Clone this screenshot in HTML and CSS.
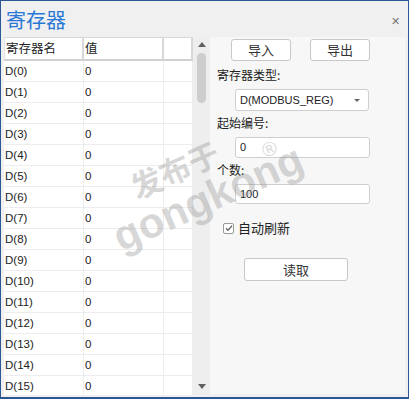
FILE: index.html
```html
<!DOCTYPE html>
<html lang="zh-CN">
<head>
    <meta charset="UTF-8">
    <title>寄存器</title>
    <link rel="stylesheet" href="styles.css">
</head>
<body>
    <div class="window">
        <div class="titlebar">
            <span class="title">寄存器</span>
            <span class="close">&#x2715;</span>
        </div>

        <div class="main">
            <div class="grid">
                <div class="row head">
                    <div class="cell">寄存器名</div>
                    <div class="cell">值</div>
                    <div class="cell"></div>
                </div>
                <div class="row"><div class="cell">D(0)</div><div class="cell">0</div><div class="cell"></div></div>
                <div class="row"><div class="cell">D(1)</div><div class="cell">0</div><div class="cell"></div></div>
                <div class="row"><div class="cell">D(2)</div><div class="cell">0</div><div class="cell"></div></div>
                <div class="row"><div class="cell">D(3)</div><div class="cell">0</div><div class="cell"></div></div>
                <div class="row"><div class="cell">D(4)</div><div class="cell">0</div><div class="cell"></div></div>
                <div class="row"><div class="cell">D(5)</div><div class="cell">0</div><div class="cell"></div></div>
                <div class="row"><div class="cell">D(6)</div><div class="cell">0</div><div class="cell"></div></div>
                <div class="row"><div class="cell">D(7)</div><div class="cell">0</div><div class="cell"></div></div>
                <div class="row"><div class="cell">D(8)</div><div class="cell">0</div><div class="cell"></div></div>
                <div class="row"><div class="cell">D(9)</div><div class="cell">0</div><div class="cell"></div></div>
                <div class="row"><div class="cell">D(10)</div><div class="cell">0</div><div class="cell"></div></div>
                <div class="row"><div class="cell">D(11)</div><div class="cell">0</div><div class="cell"></div></div>
                <div class="row"><div class="cell">D(12)</div><div class="cell">0</div><div class="cell"></div></div>
                <div class="row"><div class="cell">D(13)</div><div class="cell">0</div><div class="cell"></div></div>
                <div class="row"><div class="cell">D(14)</div><div class="cell">0</div><div class="cell"></div></div>
                <div class="row"><div class="cell">D(15)</div><div class="cell">0</div><div class="cell"></div></div>
            </div>

            <div class="scrollbar">
                <span class="arrow up"></span>
                <span class="thumb"></span>
                <span class="arrow down"></span>
            </div>

            <div class="panel">
                <div class="btn-row">
                    <button class="btn small">导入</button>
                    <button class="btn small">导出</button>
                </div>

                <div class="label first">寄存器类型:</div>
                <div class="field select">
                    <span>D(MODBUS_REG)</span>
                    <span class="caret"></span>
                </div>

                <div class="label">起始编号:</div>
                <div class="field">0</div>

                <div class="label">个数:</div>
                <div class="field short">100</div>

                <label class="check">
                    <span class="box">
                        <svg width="8" height="8" viewBox="0 0 8 8"><path d="M1 4.2 L3 6.2 L7 1.8" fill="none" stroke="#666" stroke-width="1.3"/></svg>
                    </span>
                    自动刷新
                </label>

                <button class="btn wide">读取</button>
            </div>
        </div>

        <!-- watermark from the screenshot -->
        <div class="watermark">
            <div class="wm-top">发布于</div>
            <div class="wm-bottom">gongkong</div>
            <span class="reg">®</span>
        </div>
    </div>
</body>
</html>
```

FILE: styles.css
```css
body {
    margin: 0;
    background-color: #f0f0f0;
    font-family: "Noto Sans CJK SC", "Liberation Sans", sans-serif;
}
.window {
    position: relative;
    width: 409px;
    height: 399px;
    box-sizing: border-box;
    border: 1px solid #2b5797;
    border-bottom-width: 2px;
    background-color: #f0f0f0;
    overflow: hidden;
}
.titlebar {
    height: 36px;
    display: flex;
    align-items: center;
    justify-content: space-between;
    padding: 0 8px 0 5px;
}
.title {
    font-size: 20px;
    color: #2a78d6;
    line-height: 24px;
    margin-top: 1px;
}
.close {
    font-size: 11px;
    color: #777;
    margin-top: 2px;
}
.main {
    display: flex;
    height: 358px;
    padding: 0 2px 0 3px;
}
.grid {
    width: 189px;
    background-color: #fff;
    overflow: hidden;
    flex: none;
}
.row {
    display: grid;
    grid-template-columns: 80px 80px 29px;
    height: 21px;
}
.cell {
    box-sizing: border-box;
    border-right: 1px solid #ededed;
    border-bottom: 1px solid #ededed;
    padding-left: 1px;
    font-family: "Liberation Sans", sans-serif;
    font-size: 11.5px;
    line-height: 20px;
    color: #222;
}
.row.head {
    height: 24px;
}
.head .cell {
    border-top: 1px solid #d8d8d8;
    border-right: 2px solid #d8d8d8;
    border-bottom: 2px solid #d0d0d0;
    font-family: "Noto Sans CJK SC", sans-serif;
    font-size: 12.5px;
    line-height: 20px;
    padding-left: 1px;
}
.head .cell:first-child {
    border-left: 1px solid #e4e4e4;
}
.scrollbar {
    width: 17px;
    flex: none;
    position: relative;
    background-color: #eeeeee;
}
.arrow {
    position: absolute;
    left: 5px;
    width: 0;
    height: 0;
    border-left: 4px solid transparent;
    border-right: 4px solid transparent;
}
.arrow.up {
    top: 5px;
    border-bottom: 5px solid #606060;
}
.arrow.down {
    bottom: 6px;
    border-top: 5px solid #606060;
}
.thumb {
    position: absolute;
    left: 4px;
    top: 16px;
    width: 9px;
    height: 50px;
    border-radius: 5px;
    background-color: #cdcdcd;
}
.panel {
    width: 195px;
    height: 357px;
    background-color: #f7f7f7;
    display: flex;
    flex-direction: column;
    align-items: flex-start;
}
.btn {
    box-sizing: border-box;
    background-color: #fff;
    border: 1px solid #c8c8c8;
    border-radius: 3px;
    font-family: "Noto Sans CJK SC", sans-serif;
    font-size: 13px;
    color: #333;
    padding: 0;
}
.btn-row {
    display: flex;
    gap: 19px;
    margin: 2px 0 0 21px;
}
.btn.small {
    width: 60px;
    height: 22px;
    line-height: 18px;
}
.label {
    font-size: 12px;
    line-height: 16px;
    color: #222;
    margin: 4px 0 0 7px;
}
.label.first {
    margin-top: 6px;
}
.field {
    box-sizing: border-box;
    width: 135px;
    height: 21px;
    margin: 6px 0 0 25px;
    background-color: #fff;
    border: 1px solid #cfcfcf;
    border-radius: 3px;
    padding-left: 4px;
    font-family: "Liberation Sans", sans-serif;
    font-size: 11px;
    line-height: 19px;
    color: #222;
}
.select {
    height: 22px;
    width: 134px;
    display: flex;
    justify-content: space-between;
    align-items: center;
    padding-right: 8px;
}
.caret {
    border-left: 3px solid transparent;
    border-right: 3px solid transparent;
    border-top: 3px solid #666;
}
.short {
    height: 20px;
    line-height: 18px;
}
.check {
    display: flex;
    align-items: center;
    gap: 4px;
    margin: 15px 0 0 13px;
    font-size: 13px;
    line-height: 18px;
    color: #222;
}
.box {
    box-sizing: border-box;
    width: 11px;
    height: 11px;
    border: 1px solid #999;
    border-radius: 2px;
    background-color: #fff;
    display: flex;
    align-items: center;
    justify-content: center;
}
.btn.wide {
    width: 104px;
    height: 23px;
    margin: 21px 0 0 34px;
    line-height: 20px;
}
.watermark {
    position: absolute;
    left: 92px;
    top: 188px;
    transform: rotate(-24deg);
    transform-origin: left top;
    color: rgba(140, 140, 140, 0.35);
    font-family: "Liberation Sans", "Noto Sans CJK SC", sans-serif;
    font-weight: bold;
    pointer-events: none;
}
.wm-top {
    font-family: "Noto Sans CJK SC", sans-serif;
    font-size: 31px;
    height: 34px;
    line-height: 30px;
    padding-left: 36px;
}
.wm-bottom {
    font-size: 42px;
    line-height: 42px;
}
.reg {
    position: absolute;
    left: 170px;
    top: 25px;
    font-weight: normal;
    font-size: 20px;
    line-height: 20px;
}
```
